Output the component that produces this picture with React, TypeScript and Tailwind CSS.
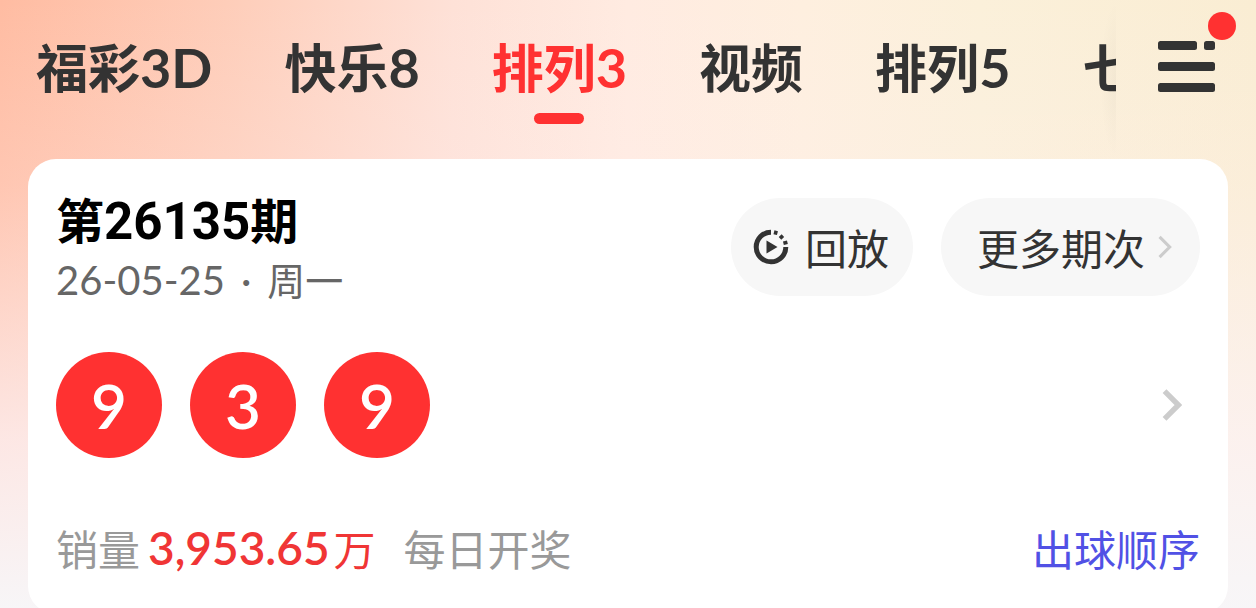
import React from 'react';

const tabs = [
    { name: '福彩', suffix: '3D' },
    { name: '快乐', suffix: '8' },
    { name: '排列', suffix: '3' },
    { name: '视频', suffix: '' },
    { name: '排列', suffix: '5' },
    { name: '七星彩', suffix: '' },
];
const activeTab = 2;
const balls = [9, 3, 9];

const ReplayIcon: React.FC = () => (
    <svg width="36" height="36" viewBox="0 0 36 36" fill="none" aria-hidden="true">
        <path d="M18 3.2A14.8 14.8 0 1 0 32.8 18" stroke="#333" strokeWidth="5" />
        <path d="M22.2 5.6l1-3.8M27 9.4l2.9-2.8M30.4 14.2l4-1" stroke="#333" strokeWidth="3.6" />
        <path d="M13.5 11.5v13L24.5 18z" fill="#333" />
    </svg>
);

const MenuIcon: React.FC = () => (
    <svg width="58" height="54" viewBox="0 0 58 54" fill="#333" aria-hidden="true">
        <rect x="0" y="1" width="39" height="9" rx="2.5" />
        <rect x="46" y="1" width="11" height="9" rx="2.5" />
        <rect x="0" y="22" width="57" height="9" rx="2.5" />
        <rect x="0" y="43" width="57" height="9" rx="2.5" />
    </svg>
);

const Chevron: React.FC<{ width: number; height: number; stroke: number }> = ({ width, height, stroke }) => (
    <svg width={width} height={height} viewBox="0 0 18 30" fill="none" aria-hidden="true">
        <path d="M2 2l13 13L2 28" stroke="#ccc" strokeWidth={stroke} />
    </svg>
);

const TabBar: React.FC = () => (
    <header className="flex h-[159px]">
        <nav className="relative flex min-w-0 flex-1 gap-[72px] overflow-hidden pt-[34px] pl-9">
            {tabs.map((tab, index) => {
                const active = index === activeTab;
                return (
                    <button
                        key={index}
                        className={`flex shrink-0 flex-col items-center text-[52px] leading-[64px] font-bold whitespace-nowrap ${active ? 'text-[#ff3131]' : 'text-[#333]'}`}
                    >
                        <span>
                            {tab.name}
                            <span className="font-[Lato] text-[54px]">{tab.suffix}</span>
                        </span>
                        {active && <span className="mt-[13px] h-[11px] w-[50px] rounded-full bg-[#ff3131]" />}
                    </button>
                );
            })}
            <div className="absolute inset-y-0 right-0 w-4 bg-[radial-gradient(ellipse_at_right,rgba(0,0,0,0.03),transparent_70%)]" />
        </nav>
        <div className="w-[140px] pt-10 pl-[42px]">
            <button aria-label="菜单" className="relative block">
                <MenuIcon />
                <span className="absolute -top-7 -right-5 size-7 rounded-full bg-[#ff3131]" />
            </button>
        </div>
    </header>
);

const DrawCard: React.FC = () => (
    <section className="mx-7 rounded-[28px] bg-white px-7 pt-8 pb-9">
        <div className="flex items-start justify-between">
            <div>
                <h2 className="text-[48px] leading-[54px] font-bold text-black">
                    第<span className="font-[Roboto] text-[51px]">26135</span>期
                </h2>
                <p className="text-[38px] leading-[60px] text-[#666]">
                    <span className="font-[Lato] text-[40px]">
                        26-05-25<span className="mx-4">·</span>
                    </span>
                    周一
                </p>
            </div>
            <div className="flex gap-7 pt-[7px] text-[42px] leading-[56px] text-[#333]">
                <button className="flex h-[98px] items-center gap-4 rounded-full bg-[#f7f7f7] pr-6 pl-[22px]">
                    <ReplayIcon />
                    回放
                </button>
                <button className="flex h-[98px] items-center gap-[13px] rounded-full bg-[#f7f7f7] pr-7 pl-9">
                    更多期次
                    <Chevron width={14} height={24} stroke={4} />
                </button>
            </div>
        </div>

        <a href="#detail" className="mt-[42px] flex items-center justify-between pr-[18px]">
            <span className="flex gap-7">
                {balls.map((ball, index) => (
                    <span
                        key={index}
                        className="flex size-[106px] items-center justify-center rounded-full bg-[#ff3131] font-[Lato] text-[62px] leading-none font-semibold text-white"
                    >
                        {ball}
                    </span>
                ))}
            </span>
            <Chevron width={20} height={32} stroke={5} />
        </a>

        <div className="mt-[60px] flex items-center justify-between text-[42px] leading-[60px] text-[#999]">
            <p className="flex items-center">
                销量
                <span className="ml-2 font-[Lato] text-[46px] font-semibold text-[#f03535]">3,953.65</span>
                <span className="ml-1 text-[#f03535]">万</span>
                <span className="ml-7">每日开奖</span>
            </p>
            <a href="#order" className="text-[#5151e5]">出球顺序</a>
        </div>
    </section>
);

export default function App() {
    return (
        <main className="min-h-screen bg-[linear-gradient(to_bottom,transparent_0%,rgba(255,240,243,0.2)_30%,rgba(252,242,245,0.8)_72%,#f7f6f8_100%),linear-gradient(to_right,#ffbca2_0%,#fecdb9_18%,#fee1d7_36%,#ffebe1_50%,#feefdf_64%,#fbf0da_78%,#faedd3_100%)] font-['Noto_Sans_CJK_SC',sans-serif]">
            <TabBar />
            <DrawCard />
        </main>
    );
}
